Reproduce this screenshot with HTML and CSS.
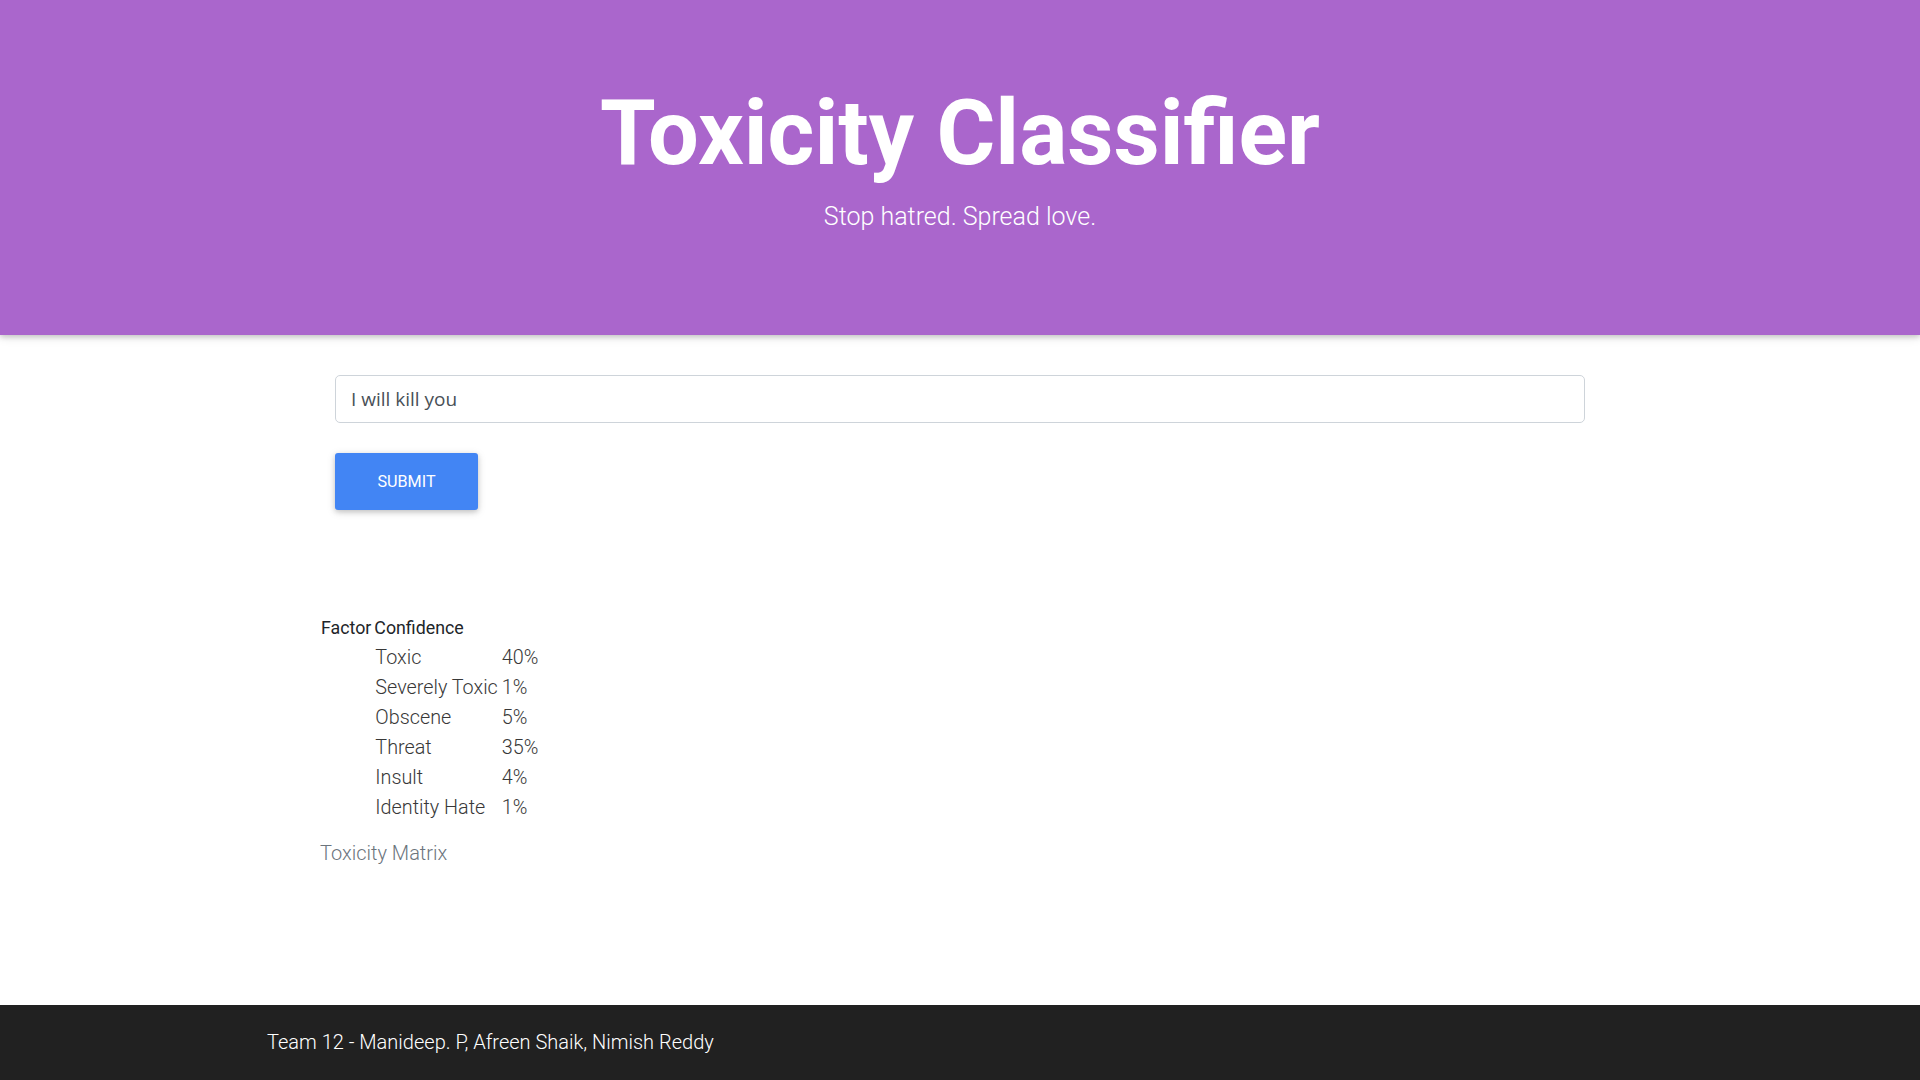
FILE: index.html
```html
<!DOCTYPE html>
<html lang="en">
<head>
<meta charset="utf-8">
<title>Toxicity Classifier</title>
<link rel="stylesheet" href="styles.css">
</head>
<body>
<header class="hero">
  <h1 class="hero-title">Toxicity Classifier</h1>
  <p class="hero-sub">Stop hatred. Spread love.</p>
</header>
<main class="main">
  <div class="container">
    <form class="form">
      <input class="text-input" type="text" value="I will kill you">
      <button class="btn-submit" type="button">SUBMIT</button>
    </form>
    <table class="matrix">
      <caption>Toxicity Matrix</caption>
      <thead>
        <tr><th>Factor</th><th>Confidence</th><th></th></tr>
      </thead>
      <tbody>
        <tr><td></td><td>Toxic</td><td>40%</td></tr>
        <tr><td></td><td>Severely Toxic</td><td>1%</td></tr>
        <tr><td></td><td>Obscene</td><td>5%</td></tr>
        <tr><td></td><td>Threat</td><td>35%</td></tr>
        <tr><td></td><td>Insult</td><td>4%</td></tr>
        <tr><td></td><td>Identity Hate</td><td>1%</td></tr>
      </tbody>
    </table>
  </div>
</main>
<footer class="footer">
  <div class="footer-inner">Team 12 - Manideep. P, Afreen Shaik, Nimish Reddy</div>
</footer>
</body>
</html>
```

FILE: styles.css
```css
* { box-sizing: border-box; }
html, body { margin: 0; padding: 0; }
body {
  font-family: Roboto, "Liberation Sans", sans-serif;
  font-weight: 300;
  color: #212529;
  background: #fff;
  min-height: 100vh;
  display: flex;
  flex-direction: column;
}
.hero {
  background: #aa66cc;
  color: #fff;
  text-align: center;
  padding: 80px 0 100px;
  box-shadow: 0 2px 5px 0 rgba(0,0,0,.16), 0 2px 10px 0 rgba(0,0,0,.12);
  position: relative;
  z-index: 1;
}
.hero-title {
  margin: 0;
  font-size: 90px;
  font-weight: 700;
  line-height: 108px;
}
.hero-sub {
  margin: 11px 0 0;
  font-size: 25px;
  font-weight: 300;
  line-height: 36px;
}
.main { flex: 1; }
.container {
  width: 1280px;
  margin: 0 auto;
}
.form {
  padding: 40px 15px 0;
  display: flex;
  flex-direction: column;
  align-items: flex-start;
}
.text-input {
  width: 100%;
  height: 48px;
  border: 1px solid #ced4da;
  border-radius: 5px;
  padding: 0 15px;
  font-family: "Open Sans", "Noto Sans", sans-serif;
  font-size: 19px;
  color: #495057;
  background: #fff;
  outline: none;
}
.btn-submit {
  margin-top: 30px;
  width: 143px;
  height: 57px;
  border: 0;
  border-radius: 3px;
  background: #4285f4;
  color: #fff;
  font-family: Roboto, sans-serif;
  font-weight: 400;
  font-size: 16.2px;
  box-shadow: 0 2px 5px 0 rgba(0,0,0,.16), 0 2px 10px 0 rgba(0,0,0,.12);
  cursor: pointer;
}
.matrix {
  margin-top: 102px;
  margin-left: -1px;
  border-spacing: 2px;
  caption-side: bottom;
}
.matrix caption {
  text-align: left;
  padding-top: 14px;
  padding-left: 1px;
  font-size: 20px;
  line-height: 30px;
  font-weight: 300;
  color: #6c757d;
}
.matrix th {
  font-size: 17.8px;
  font-weight: 400;
  color: #212529;
  text-align: left;
  padding: 1px 1px 1px 0;
  line-height: 26px;
}
.matrix td {
  font-size: 19.8px;
  font-weight: 300;
  color: #383838;
  padding: 1px;
  line-height: 26px;
  white-space: nowrap;
}
.footer {
  background: #212121;
  color: #fff;
  height: 75px;
}
.footer-inner {
  width: 1386px;
  margin: 0 auto;
  padding-top: 22px;
  font-size: 20px;
  font-weight: 300;
  line-height: 30px;
}
```
